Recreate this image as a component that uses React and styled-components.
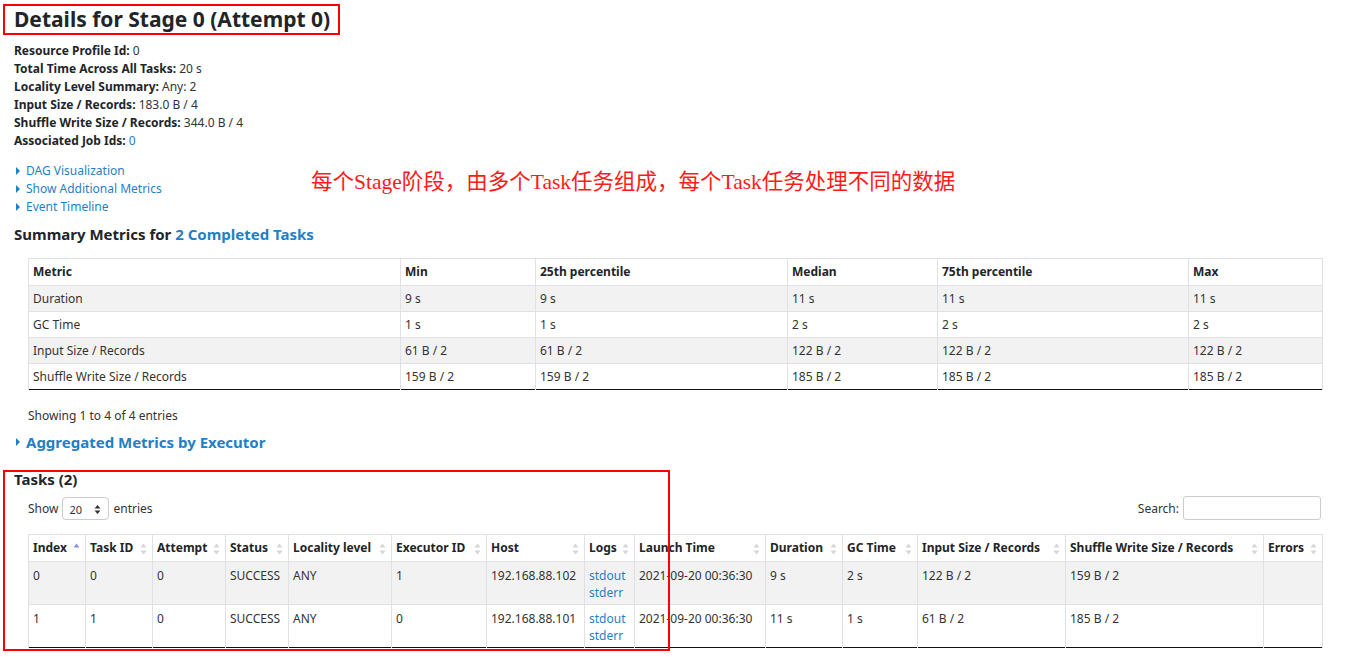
import React from 'react';
import styled, { createGlobalStyle } from 'styled-components';

const GlobalStyle = createGlobalStyle`
  html, body {
    margin: 0;
    padding: 0;
    background: #fff;
  }
  body {
    font-family: "Noto Sans", "Open Sans", sans-serif;
    font-size: 12px;
    color: #212529;
  }
`;

const LINK = '#1f80c6';

const Page = styled.div`
  position: relative;
  padding: 4px 14px 0 14px;
  width: 1349px;
  min-height: 657px;
  box-sizing: border-box;
`;

const TitleBox = styled.div`
  display: inline-block;
  border: 2px solid #f00;
  margin-left: -11px;
  padding: 0 8px 0 9px;
`;

const Title = styled.h3`
  margin: 0;
  font-size: 21px;
  font-weight: 700;
  line-height: 27px;
  color: #212529;
`;

const InfoList = styled.ul`
  list-style: none;
  margin: 7px 0 0;
  padding: 0;
  li {
    line-height: 18px;
    color: #333;
  }
  strong {
    color: #212529;
  }
`;

const Link = styled.a`
  color: ${LINK};
  text-decoration: none;
  cursor: pointer;
`;

const Toggles = styled.div`
  margin-top: 12px;
  display: flex;
  flex-direction: column;
`;

const Toggle = styled.div`
  display: flex;
  align-items: center;
  gap: 4px;
  line-height: 18px;
  font-size: ${p => (p.$big ? '15px' : '12px')};
  font-weight: ${p => (p.$big ? 700 : 400)};
  height: ${p => (p.$big ? '20px' : '18px')};
  margin: ${p => p.$mt || '0'} 0 0 2px;
`;

const Caret = styled.span`
  width: 0;
  height: 0;
  border-top: 4px solid transparent;
  border-bottom: 4px solid transparent;
  border-left: 4px solid ${LINK};
  margin-right: 2px;
`;

const Note = styled.div`
  position: absolute;
  left: 311px;
  top: 169px;
  font-family: "Liberation Serif", "Noto Sans CJK SC", serif;
  font-size: 21.5px;
  line-height: 26px;
  color: #ff1a1a;
`;

const SectionTitle = styled.h4`
  margin: ${p => p.$mt || '0'} 0 0;
  font-size: 15px;
  font-weight: 700;
  line-height: 20px;
  color: #212529;
`;

const Table = styled.table`
  margin: ${p => p.$mt || '14px'} 0 0 14px;
  width: 1294px;
  border-collapse: collapse;
  table-layout: fixed;
  border-bottom: 1.5px solid #111;
  th, td {
    border-left: 1px solid #dee2e6;
    border-right: 1px solid #dee2e6;
    text-align: left;
    vertical-align: top;
    overflow: hidden;
    white-space: nowrap;
  }
  th {
    border-top: 1px solid #dee2e6;
    border-bottom: 1px solid #dee2e6;
    font-weight: 700;
    color: #212529;
    padding: 4px 4px;
    line-height: 18px;
    position: relative;
  }
  td {
    color: #333;
    border-top: 1px solid #dee2e6;
    padding: ${p => (p.$tall ? '5px 4px 3px' : '4px 4px 3px')};
    line-height: ${p => (p.$tall ? '17px' : '18px')};
  }
  tbody tr:nth-child(odd) td {
    background: #f2f2f2;
  }
`;

const SortIcon = styled.svg`
  position: absolute;
  right: 5px;
  top: 7px;
`;

const Showing = styled.div`
  margin: 17px 0 0 14px;
  line-height: 18px;
  color: #333;
`;

const Controls = styled.div`
  display: flex;
  justify-content: space-between;
  align-items: center;
  margin: 7px 0 0 14px;
  width: 1294px;
`;

const Label = styled.label`
  display: flex;
  align-items: center;
  gap: 4px;
  color: #333;
`;

const Select = styled.div`
  width: 47px;
  height: 23px;
  box-sizing: border-box;
  border: 1px solid #ccc;
  border-radius: 4px;
  display: flex;
  align-items: center;
  justify-content: space-between;
  padding: 2px 7px 0 6px;
  font-size: 11px;
  color: #333;
`;

const SearchInput = styled.input`
  width: 138px;
  height: 24px;
  box-sizing: border-box;
  border: 1px solid #ccc;
  border-radius: 3px;
  margin-right: 1px;
`;

const Annotation = styled.div`
  position: absolute;
  left: 3px;
  top: 470px;
  width: 667px;
  height: 181px;
  box-sizing: border-box;
  border: 2px solid #f00;
  pointer-events: none;
`;

const Sort = ({ active }) => (
  <SortIcon width="7" height="14" viewBox="0 0 7 14">
    <path d="M0.5 5.5 L3.5 1.5 L6.5 5.5 Z" fill={active ? '#8d91e3' : '#d6d6d6'} />
    {!active && <path d="M0.5 8.5 L3.5 12.5 L6.5 8.5 Z" fill="#d6d6d6" />}
  </SortIcon>
);

const summaryCols = [372, 135, 252, 150, 251, 134];
const summaryHead = ['Metric', 'Min', '25th percentile', 'Median', '75th percentile', 'Max'];
const summaryRows = [
  ['Duration', '9 s', '9 s', '11 s', '11 s', '11 s'],
  ['GC Time', '1 s', '1 s', '2 s', '2 s', '2 s'],
  ['Input Size / Records', '61 B / 2', '61 B / 2', '122 B / 2', '122 B / 2', '122 B / 2'],
  ['Shuffle Write Size / Records', '159 B / 2', '159 B / 2', '185 B / 2', '185 B / 2', '185 B / 2'],
];

const taskCols = [57, 67, 73, 63, 103, 95, 98, 50, 131, 77, 75, 148, 198, 59];
const taskHead = [
  'Index', 'Task ID', 'Attempt', 'Status', 'Locality level', 'Executor ID', 'Host',
  'Logs', 'Launch Time', 'Duration', 'GC Time', 'Input Size / Records',
  'Shuffle Write Size / Records', 'Errors',
];
const tasks = [
  ['0', '0', '0', 'SUCCESS', 'ANY', '1', '192.168.88.102', 'logs', '2021-09-20 00:36:30', '9 s', '2 s', '122 B / 2', '159 B / 2', ''],
  ['1', '1', '0', 'SUCCESS', 'ANY', '0', '192.168.88.101', 'logs', '2021-09-20 00:36:30', '11 s', '1 s', '61 B / 2', '185 B / 2', ''],
];

export default function App() {
  return (
    <Page>
      <GlobalStyle />
      <TitleBox>
        <Title>Details for Stage 0 (Attempt 0)</Title>
      </TitleBox>
      <InfoList>
        <li><strong>Resource Profile Id:</strong> 0</li>
        <li><strong>Total Time Across All Tasks:</strong> 20 s</li>
        <li><strong>Locality Level Summary:</strong> Any: 2</li>
        <li><strong>Input Size / Records:</strong> 183.0 B / 4</li>
        <li><strong>Shuffle Write Size / Records:</strong> 344.0 B / 4</li>
        <li><strong>Associated Job Ids:</strong> <Link>0</Link></li>
      </InfoList>

      <Toggles>
        <Toggle><Caret /><Link>DAG Visualization</Link></Toggle>
        <Toggle><Caret /><Link>Show Additional Metrics</Link></Toggle>
        <Toggle><Caret /><Link>Event Timeline</Link></Toggle>
      </Toggles>

      <Note>每个Stage阶段，由多个Task任务组成，每个Task任务处理不同的数据</Note>

      <SectionTitle $mt="8px">
        Summary Metrics for <Link>2 Completed Tasks</Link>
      </SectionTitle>

      <Table $mt="14px">
        <colgroup>
          {summaryCols.map((w, i) => <col key={i} style={{ width: w }} />)}
        </colgroup>
        <thead>
          <tr>{summaryHead.map(h => <th key={h}>{h}</th>)}</tr>
        </thead>
        <tbody>
          {summaryRows.map(r => (
            <tr key={r[0]}>{r.map((c, i) => <td key={i}>{c}</td>)}</tr>
          ))}
        </tbody>
      </Table>

      <Showing>Showing 1 to 4 of 4 entries</Showing>

      <Toggle $big $mt="7px"><Caret /><Link>Aggregated Metrics by Executor</Link></Toggle>

      <SectionTitle $mt="17px">Tasks (2)</SectionTitle>

      <Controls>
        <Label>
          Show
          <Select>20
            <svg width="7" height="11" viewBox="0 0 7 11">
              <path d="M0.5 4.5 L3.5 1 L6.5 4.5 Z" fill="#333" />
              <path d="M0.5 6.5 L3.5 10 L6.5 6.5 Z" fill="#333" />
            </svg>
          </Select>
          entries
        </Label>
        <Label>Search: <SearchInput /></Label>
      </Controls>

      <Table $mt="14px" $tall>
        <colgroup>
          {taskCols.map((w, i) => <col key={i} style={{ width: w }} />)}
        </colgroup>
        <thead>
          <tr>
            {taskHead.map((h, i) => (
              <th key={h}>{h}<Sort active={i === 0} /></th>
            ))}
          </tr>
        </thead>
        <tbody>
          {tasks.map(r => (
            <tr key={r[0]}>
              {r.map((c, i) => (
                <td key={i}>
                  {c === 'logs' ? (
                    <>
                      <Link>stdout</Link><br /><Link>stderr</Link>
                    </>
                  ) : c}
                </td>
              ))}
            </tr>
          ))}
        </tbody>
      </Table>

      <Annotation />
    </Page>
  );
}
